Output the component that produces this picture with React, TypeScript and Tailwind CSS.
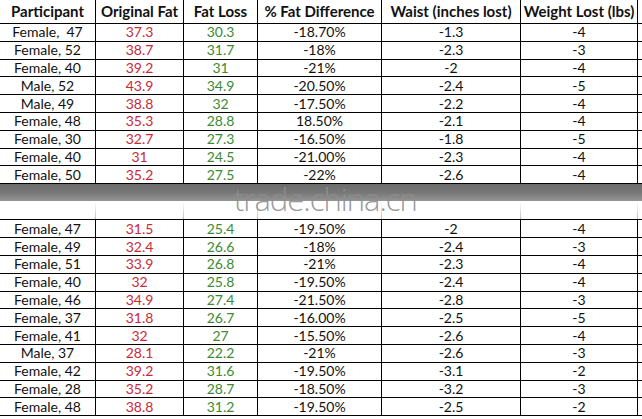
const RED = "text-[#c92a36]";
const GREEN = "text-[#3c8a34]";

type Row = [string, string, string, string, string, string];

const topRows: Row[] = [
  ["Female,\u00a0 47", "37.3", "30.3", "-18.70%", "-1.3", "-4"],
  ["Female, 52", "38.7", "31.7", "-18%", "-2.3", "-3"],
  ["Female, 40", "39.2", "31", "-21%", "-2", "-4"],
  ["Male, 52", "43.9", "34.9", "-20.50%", "-2.4", "-5"],
  ["Male, 49", "38.8", "32", "-17.50%", "-2.2", "-4"],
  ["Female, 48", "35.3", "28.8", "18.50%", "-2.1", "-4"],
  ["Female, 30", "32.7", "27.3", "-16.50%", "-1.8", "-5"],
  ["Female, 40", "31", "24.5", "-21.00%", "-2.3", "-4"],
  ["Female, 50", "35.2", "27.5", "-22%", "-2.6", "-4"],
];

const bottomRows: Row[] = [
  ["Female, 47", "31.5", "25.4", "-19.50%", "-2", "-4"],
  ["Female, 49", "32.4", "26.6", "-18%", "-2.4", "-3"],
  ["Female, 51", "33.9", "26.8", "-21%", "-2.3", "-4"],
  ["Female, 40", "32", "25.8", "-19.50%", "-2.4", "-4"],
  ["Female, 46", "34.9", "27.4", "-21.50%", "-2.8", "-3"],
  ["Female, 37", "31.8", "26.7", "-16.00%", "-2.5", "-5"],
  ["Female, 41", "32", "27", "-15.50%", "-2.6", "-4"],
  ["Male, 37", "28.1", "22.2", "-21%", "-2.6", "-3"],
  ["Female, 42", "39.2", "31.6", "-19.50%", "-3.1", "-2"],
  ["Female, 28", "35.2", "28.7", "-18.50%", "-3.2", "-3"],
  ["Female, 48", "38.8", "31.2", "-19.50%", "-2.5", "-2"],
];

const GRID = "grid grid-cols-[96px_88px_74px_124px_139px_117px]";
const CELL = "flex items-center justify-center border-r border-black";

function DataRow({ row }: { row: Row }) {
  return (
    <div className={`${GRID} h-[17.8px] border-b border-black`}>
      <div className={CELL}>{row[0]}</div>
      <div className={`${CELL} ${RED}`}>{row[1]}</div>
      <div className={`${CELL} ${GREEN}`}>{row[2]}</div>
      <div className={CELL}>{row[3]}</div>
      <div className={CELL}>{row[4]}</div>
      <div className={CELL}>{row[5]}</div>
    </div>
  );
}

function App() {
  const headers = [
    "Participant",
    "Original Fat",
    "Fat Loss",
    "% Fat Difference",
    "Waist (inches lost)",
    "Weight Lost (lbs)",
  ];

  return (
    <div className="relative w-[642px] h-[419px] overflow-hidden bg-white font-['Lato','Open_Sans',sans-serif] text-[14px] leading-none text-[#111]">
      <div className={`${GRID} h-[24px] border-b border-black font-bold text-[15px]`}>
        {headers.map((h) => (
          <div key={h} className={CELL}>
            {h}
          </div>
        ))}
      </div>

      {topRows.map((r, i) => (
        <DataRow key={"t" + i} row={r} />
      ))}

      {/* torn / cut band */}
      <div className="h-[17px] bg-gradient-to-b from-[#6c6c6c] via-[#777] to-[#959595]" />
      <div className={`${GRID} h-[18.2px]`}>
        {headers.map((h) => (
          <div key={h} className="flex justify-end">
            <div className="w-px h-full bg-gradient-to-b from-transparent via-[#e4e4e4] to-[#bcbcbc]" />
          </div>
        ))}
      </div>

      <div className="border-t border-black">
        {bottomRows.map((r, i) => (
          <DataRow key={"b" + i} row={r} />
        ))}
      </div>

      <div className="absolute left-[234px] top-[188px] font-['Open_Sans',sans-serif] font-light text-[31px] leading-[22px] tracking-[-1px] text-[#8e8e8e]/90">
        trade.china.cn
      </div>
    </div>
  );
}

export default App;
